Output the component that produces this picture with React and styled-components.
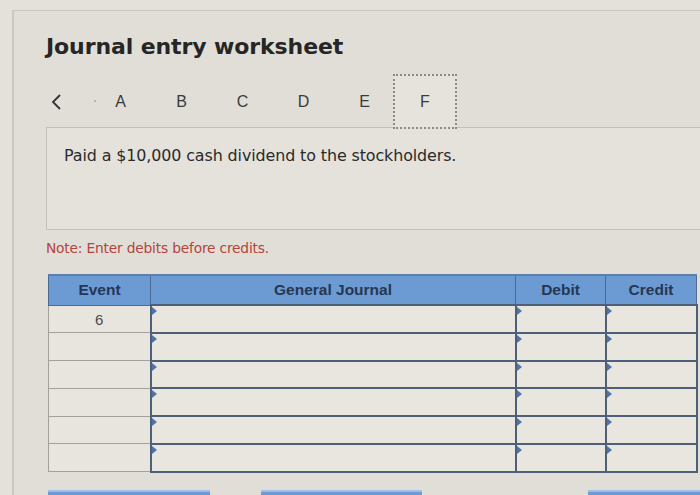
import React from 'react'
import styled, { createGlobalStyle } from 'styled-components'

const GlobalStyle = createGlobalStyle`
  html, body {
    margin: 0;
    padding: 0;
    background: #e4e1da;
    overflow: hidden;
  }
  body {
    font-family: "DejaVu Sans", Verdana, sans-serif;
  }
`

const Page = styled.div`
  width: 700px;
  height: 495px;
  padding: 10px 0 0 12px;
  box-sizing: border-box;
  overflow: hidden;
`

const Panel = styled.div`
  width: 720px;
  height: 520px;
  border-top: 1px solid #cbc8c1;
  border-left: 2px solid #cbc8c1;
  background: #e1ded7;
  padding: 23px 0 0 32px;
  box-sizing: border-box;
`

const Title = styled.h1`
  margin: 0;
  font-family: "DejaVu Sans", Verdana, sans-serif;
  font-weight: bold;
  font-size: 22px;
  line-height: 26px;
  color: #262626;
  letter-spacing: -0.1px;
`

const Nav = styled.div`
  display: flex;
  align-items: center;
  height: 55px;
  margin-top: 14px;
  margin-bottom: -2px;
`

const Back = styled.div`
  width: 44px;
  height: 55px;
  display: flex;
  align-items: center;
  position: relative;
`

const Dot = styled.span`
  position: absolute;
  left: 48px;
  top: 26px;
  width: 2px;
  height: 2px;
  border-radius: 50%;
  background: #aaa69f;
`

const Tab = styled.div`
  width: ${(p) => (p.$active ? '64px' : '61px')};
  margin-left: ${(p) => (p.$active ? '-2px' : '0')};
  height: 55px;
  box-sizing: border-box;
  display: flex;
  align-items: center;
  justify-content: center;
  font-family: "Liberation Sans", Arial, sans-serif;
  font-size: 16px;
  color: #3a3a3a;
  position: relative;
  border: ${(p) => (p.$active ? '2px dotted #8a8a8a' : '2px solid transparent')};
  background: ${(p) => (p.$active ? '#e6e3dc' : 'transparent')};
`

const Prompt = styled.div`
  height: 103px;
  border: 1px solid #c4c1ba;
  border-right: none;
  background: #e5e2dc;
  padding: 18px 0 0 17px;
  box-sizing: border-box;
  font-size: 15.9px;
  letter-spacing: -0.1px;
  color: #2a2a2a;
`

const Note = styled.div`
  margin-top: 10px;
  font-size: 13.8px;
  color: #b5443c;
  letter-spacing: -0.2px;
`

const Table = styled.table`
  margin-top: 18px;
  margin-left: 2px;
  border-collapse: collapse;
  table-layout: fixed;
  font-family: "Liberation Sans", Arial, sans-serif;
`

const Head = styled.th`
  height: 28px;
  padding: 0;
  background: #6c9bd4;
  border: 1px solid #4f6a91;
  border-top: 2px solid #5c7fae;
  color: #253754;
  font-weight: bold;
  font-size: 15.5px;
  text-align: center;
  width: ${(p) => p.$w}px;
`

const EventCell = styled.td`
  height: 25.8px;
  padding: 0;
  border: 1px solid #a3a19c;
  background: #e8e5df;
  text-align: center;
  font-size: 15px;
  color: #4a4a4a;
  vertical-align: top;
  padding-top: 5px;
  box-sizing: border-box;
`

const InputCell = styled.td`
  height: 25.8px;
  padding: 0;
  border: 2px solid #4e5f7a;
  background: #e9e6e0;
  position: relative;
`

const Marker = styled.span`
  position: absolute;
  left: 0;
  top: 1px;
  width: 0;
  height: 0;
  border-top: 4px solid transparent;
  border-bottom: 4px solid transparent;
  border-left: 5px solid #4f73a8;
`

const Buttons = styled.div`
  display: flex;
  margin-top: 17px;
  margin-left: 2px;
`

const Button = styled.div`
  width: ${(p) => p.$w}px;
  height: 30px;
  margin-right: ${(p) => p.$gap}px;
  background: #6c9bd4;
  border-top: 2px solid #9ebfe6;
  box-sizing: border-box;
`

const tabs = ['A', 'B', 'C', 'D', 'E', 'F']
const rows = ['6', '', '', '', '', '']

const App = () => (
  <Page>
    <GlobalStyle />
    <Panel>
      <Title>Journal entry worksheet</Title>
      <Nav>
        <Back>
          <svg width="14" height="18" viewBox="0 0 14 18" style={{ marginLeft: 3 }}>
            <polyline points="11,2 4,9 11,16" fill="none" stroke="#333" strokeWidth="1.8" />
          </svg>
          <Dot />
        </Back>
        {tabs.map((t) => (
          <Tab key={t} $active={t === 'F'}>
            {t}
          </Tab>
        ))}
      </Nav>
      <Prompt>Paid a $10,000 cash dividend to the stockholders.</Prompt>
      <Note>Note: Enter debits before credits.</Note>
      <Table>
        <thead>
          <tr>
            <Head $w={101}>Event</Head>
            <Head $w={364}>General Journal</Head>
            <Head $w={89}>Debit</Head>
            <Head $w={90}>Credit</Head>
          </tr>
        </thead>
        <tbody>
          {rows.map((r, i) => (
            <tr key={i}>
              <EventCell>{r}</EventCell>
              <InputCell>
                <Marker />
              </InputCell>
              <InputCell>
                <Marker />
              </InputCell>
              <InputCell>
                <Marker />
              </InputCell>
            </tr>
          ))}
        </tbody>
      </Table>
      <Buttons>
        <Button $w={162} $gap={51} />
        <Button $w={161} $gap={166} />
        <Button $w={120} $gap={0} />
      </Buttons>
    </Panel>
  </Page>
)

export default App
